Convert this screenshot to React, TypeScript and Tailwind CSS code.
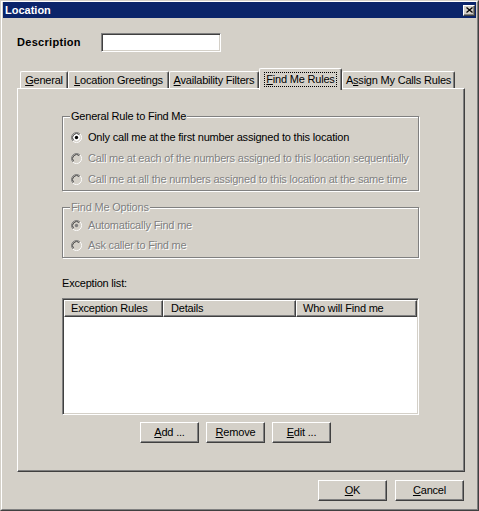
import React from 'react';

function Radio({ checked, disabled }: { checked?: boolean; disabled?: boolean }) {
  return (
    <svg width="11" height="11" viewBox="0 0 11 11" className="shrink-0">
      <circle cx="5.5" cy="5.5" r="4" fill={disabled ? '#d4d0c8' : '#ffffff'} />
      <path d="M1.964 9.036 A5 5 0 0 1 9.036 1.964" fill="none" stroke="#808080" strokeWidth="1" />
      <path d="M9.036 1.964 A5 5 0 0 1 1.964 9.036" fill="none" stroke="#ffffff" strokeWidth="1" />
      <path d="M2.672 8.328 A4 4 0 0 1 8.328 2.672" fill="none" stroke="#404040" strokeWidth="1" />
      <path d="M8.328 2.672 A4 4 0 0 1 2.672 8.328" fill="none" stroke="#d4d0c8" strokeWidth="1" />
      {checked && <circle cx="5.5" cy="5.5" r="1.7" fill={disabled ? '#808080' : '#000000'} />}
    </svg>
  );
}

function RadioRow({
  label,
  checked,
  disabled,
  h,
}: {
  label: string;
  checked?: boolean;
  disabled?: boolean;
  h: 'a' | 'b';
}) {
  return (
    <div className={(h === 'a' ? 'h-[21px]' : 'h-[20px]') + ' flex items-center gap-[6px]'}>
      <Radio checked={checked} disabled={disabled} />
      <span
        className={
          disabled
            ? 'text-[#808080] [text-shadow:1px_1px_0_#ffffff] whitespace-nowrap'
            : 'text-black whitespace-nowrap'
        }
      >
        {label}
      </span>
    </div>
  );
}

function Btn({ children, w }: { children: React.ReactNode; w: string }) {
  return (
    <div
      className={
        w +
        ' h-[21px] flex items-center justify-center border border-t-white border-l-white border-r-[#404040] border-b-[#404040] shadow-[inset_-1px_-1px_0_#808080] bg-[#d4d0c8]'
      }
    >
      {children}
    </div>
  );
}

function U({ children }: { children: React.ReactNode }) {
  return <span className="underline underline-offset-[1px] decoration-1">{children}</span>;
}

function Tab({ w, children }: { w: string; children: React.ReactNode }) {
  return (
    <div
      className={
        w +
        ' h-[17px] flex items-center justify-center whitespace-nowrap border-l border-t border-r border-l-white border-t-white border-r-[#404040] shadow-[inset_-1px_0_0_#808080] rounded-t-[2px]'
      }
    >
      {children}
    </div>
  );
}

function HeaderCell({ w, children }: { w: string; children: React.ReactNode }) {
  return (
    <div
      className={
        w +
        ' h-[17px] flex items-center pl-[6px] whitespace-nowrap bg-[#d4d0c8] border border-t-white border-l-white border-r-[#404040] border-b-[#404040] shadow-[inset_-1px_-1px_0_#808080]'
      }
    >
      {children}
    </div>
  );
}

export default function App() {
  return (
    <div className="w-[479px] h-[511px] border border-t-[#d4d0c8] border-l-[#d4d0c8] border-r-[#404040] border-b-[#404040] bg-[#d4d0c8] font-['Liberation_Sans',Arial,sans-serif] text-[11px] leading-[13px] tracking-[-0.2px] text-black">
      <div className="h-full border border-t-white border-l-white border-r-[#808080] border-b-[#808080] px-[1px] flex flex-col">
        {/* Title bar */}
        <div className="h-[16px] shrink-0 bg-[#0a246a] flex items-center justify-between pl-[2px] pr-[1px]">
          <span className="text-white font-bold tracking-normal">Location</span>
          <div className="w-[12px] h-[11px] flex items-center justify-center bg-[#d4d0c8] border border-t-white border-l-white border-r-[#404040] border-b-[#404040] shadow-[inset_-1px_-1px_0_#808080]">
            <svg width="7" height="6" viewBox="0 0 7 6">
              <path d="M0.5 0.5 L6.5 5.5 M6.5 0.5 L0.5 5.5" stroke="#000" strokeWidth="1.3" />
            </svg>
          </div>
        </div>

        {/* Body */}
        <div className="flex-1 flex flex-col pl-[14px]">
          <div className="mt-[15px] h-[19px] flex items-center">
            <span className="w-[84px] font-bold tracking-[0.3px]">Description</span>
            <div className="w-[120px] h-[19px] bg-white border border-t-[#808080] border-l-[#808080] border-r-white border-b-white shadow-[inset_1px_1px_0_#404040,inset_-1px_-1px_0_#d4d0c8]" />
          </div>

          {/* Tabs */}
          <div className="mt-[16px] h-[20px] flex items-end pl-[3px] relative z-10">
            <Tab w="w-[48px]">
              <span>
                <U>G</U>eneral
              </span>
            </Tab>
            <Tab w="w-[101px]">
              <span>
                <U>L</U>ocation Greetings
              </span>
            </Tab>
            <Tab w="w-[90px]">
              <span>
                <U>A</U>vailability Filters
              </span>
            </Tab>
            <div className="w-[83px] h-[22px] -mb-[2px] bg-[#d4d0c8] flex justify-center items-start pt-[3px] whitespace-nowrap border-l border-t border-r border-l-white border-t-white border-r-[#404040] shadow-[inset_-1px_0_0_#808080] rounded-t-[2px]">
              <div className="h-[15px] px-[1px] flex items-center border border-dotted border-black">
                <span>
                  <U>F</U>ind Me Rules
                </span>
              </div>
            </div>
            <Tab w="w-[113px]">
              <span>
                A<U>s</U>sign My Calls Rules
              </span>
            </Tab>
          </div>

          {/* Panel */}
          <div className="w-[448px] h-[384px] border border-t-white border-l-white border-r-[#404040] border-b-[#404040] shadow-[inset_-1px_-1px_0_#808080]">
            <div className="pl-[44px] pt-[27px] flex flex-col">
              {/* Group 1 */}
              <div className="relative w-[357px] h-[75px] border border-[#808080] shadow-[inset_1px_1px_0_#ffffff,1px_1px_0_#ffffff] pt-[10px] pl-[8px]">
                <span className="absolute left-[7px] top-[-7px] px-[1px] bg-[#d4d0c8] whitespace-nowrap">
                  General Rule to Find Me
                </span>
                <RadioRow h="a" checked label="Only call me at the first number assigned to this location" />
                <RadioRow h="a" disabled label="Call me at each of the numbers assigned to this location sequentially" />
                <RadioRow h="a" disabled label="Call me at all the numbers assigned to this location at the same time" />
              </div>

              {/* Group 2 */}
              <div className="relative mt-[16px] w-[357px] h-[51px] border border-[#808080] shadow-[inset_1px_1px_0_#ffffff,1px_1px_0_#ffffff] pt-[7px] pl-[8px]">
                <span className="absolute left-[7px] top-[-7px] px-[1px] bg-[#d4d0c8] whitespace-nowrap text-[#808080] [text-shadow:1px_1px_0_#ffffff]">
                  Find Me Options
                </span>
                <RadioRow h="b" checked disabled label="Automatically Find me" />
                <RadioRow h="b" disabled label="Ask caller to Find me" />
              </div>

              <div className="mt-[19px] h-[13px]">Exception list:</div>

              {/* List */}
              <div className="mt-[8px] w-[357px] h-[117px] bg-white p-[1px] border border-t-[#808080] border-l-[#808080] border-r-white border-b-white shadow-[inset_1px_1px_0_#404040,inset_-1px_-1px_0_#d4d0c8]">
                <div className="flex">
                  <HeaderCell w="w-[99px]">Exception Rules</HeaderCell>
                  <HeaderCell w="w-[133px] pl-[7px]">Details</HeaderCell>
                  <HeaderCell w="flex-1">Who will Find me</HeaderCell>
                </div>
              </div>

              {/* Buttons */}
              <div className="mt-[7px] ml-[78px] flex gap-[7px]">
                <Btn w="w-[59px]">
                  <span>
                    <U>A</U>dd ...
                  </span>
                </Btn>
                <Btn w="w-[59px]">
                  <span>
                    <U>R</U>emove
                  </span>
                </Btn>
                <Btn w="w-[59px]">
                  <span>
                    <U>E</U>dit ...
                  </span>
                </Btn>
              </div>
            </div>
          </div>

          {/* OK / Cancel */}
          <div className="mt-[8px] pr-[12px] flex justify-end gap-[8px]">
            <Btn w="w-[69px]">
              <span>
                <U>O</U>K
              </span>
            </Btn>
            <Btn w="w-[69px]">
              <span>
                <U>C</U>ancel
              </span>
            </Btn>
          </div>
        </div>
      </div>
    </div>
  );
}
